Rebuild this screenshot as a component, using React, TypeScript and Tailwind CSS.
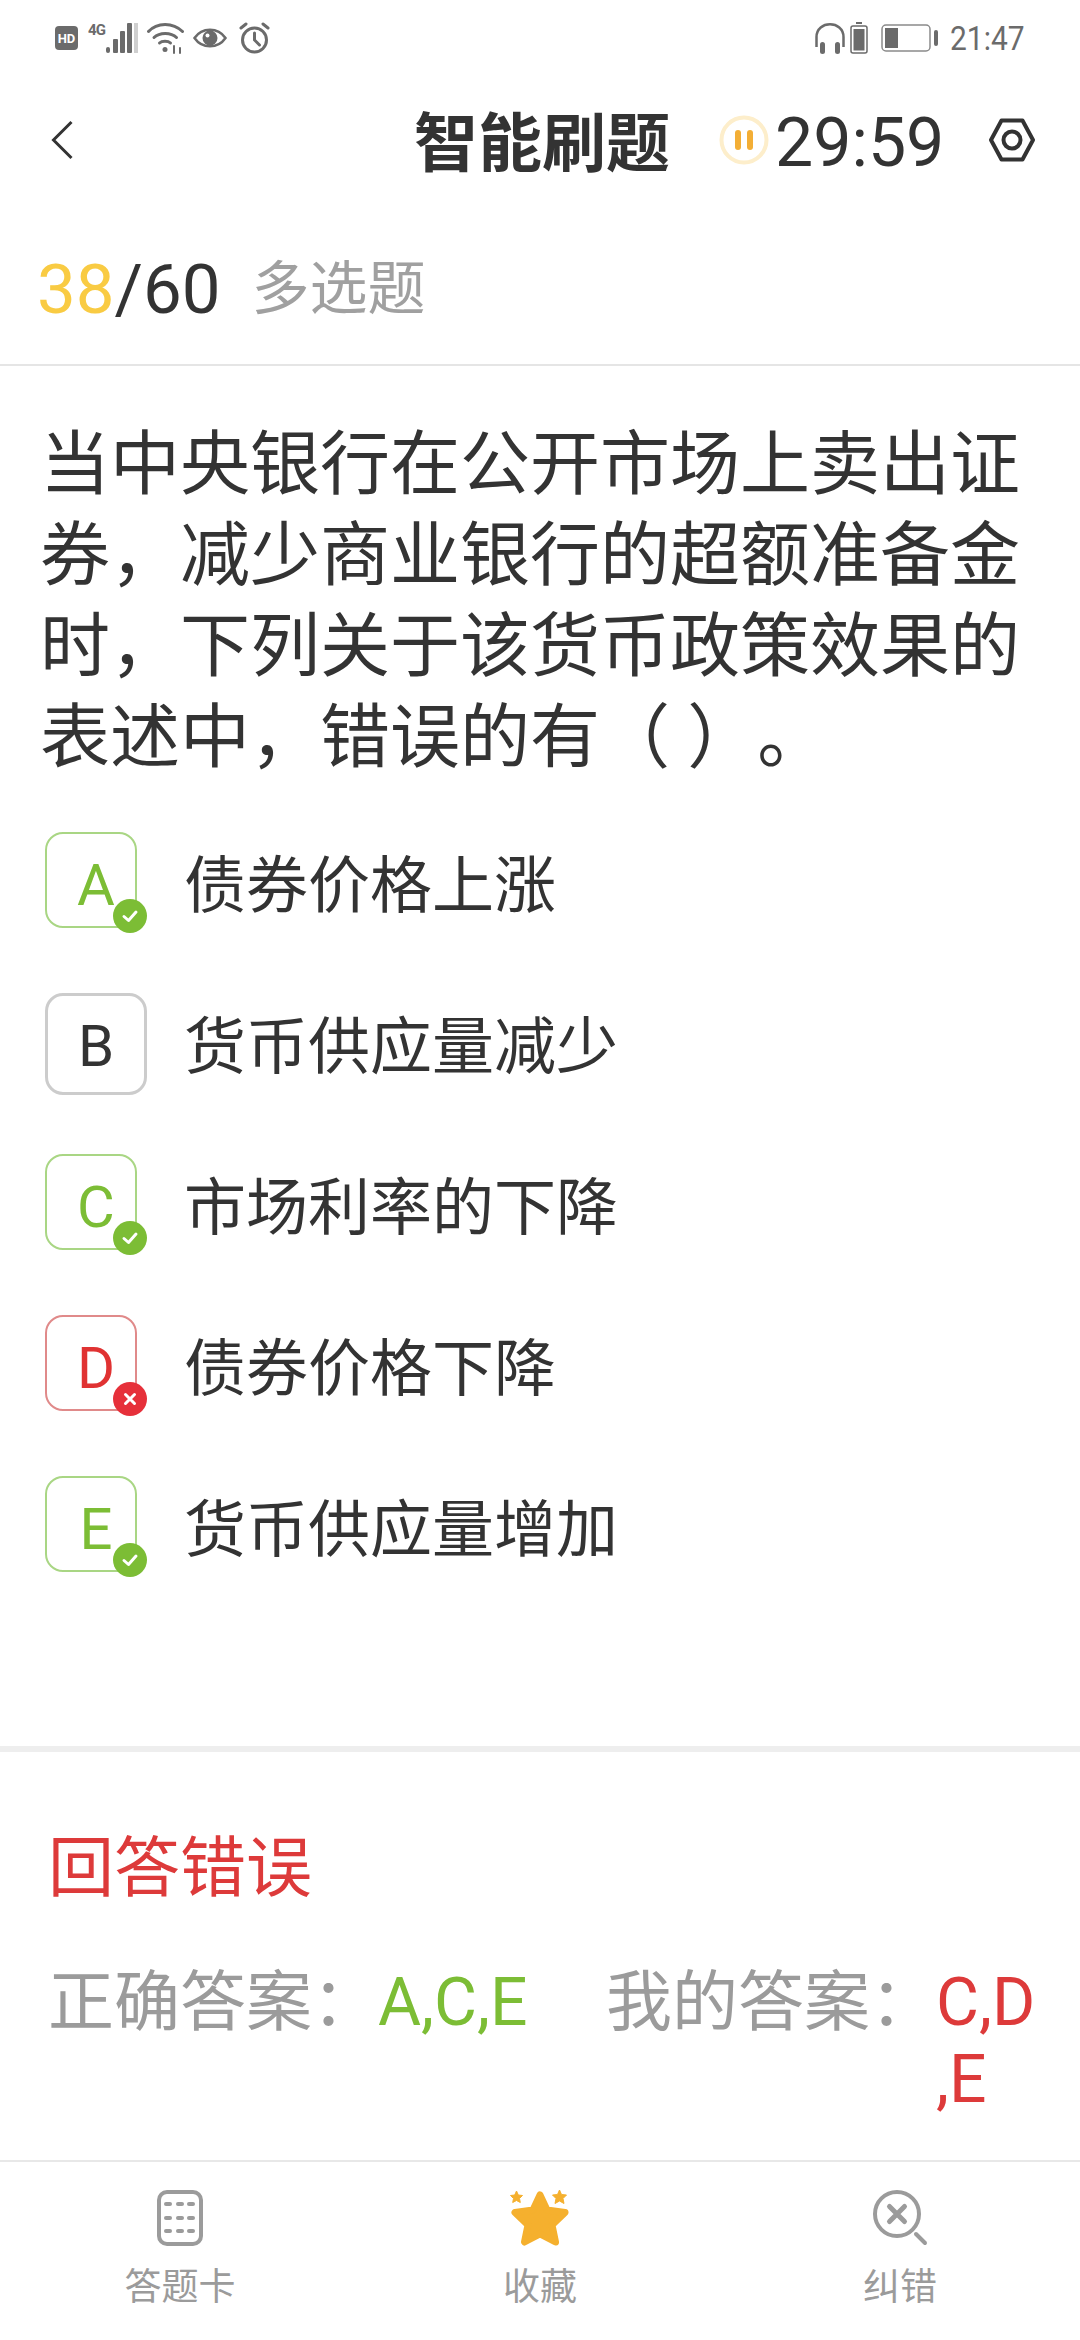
import React from 'react';

const font = "font-['Roboto','Noto_Sans_CJK_SC',sans-serif]";

const options = [
  { letter: 'A', text: '债券价格上涨', state: 'right' },
  { letter: 'B', text: '货币供应量减少', state: 'none' },
  { letter: 'C', text: '市场利率的下降', state: 'right' },
  { letter: 'D', text: '债券价格下降', state: 'wrong' },
  { letter: 'E', text: '货币供应量增加', state: 'right' },
];

function StatusLeft() {
  return (
    <div className="flex items-center">
      <svg width="24" height="24" viewBox="0 0 24 24" className="ml-[55px]">
        <rect x="0" y="0" width="23" height="24" rx="4" fill="#6b6b6b" />
        <text x="11.5" y="17" textAnchor="middle" fontSize="13" fontWeight="700" fill="#fff" fontFamily="Roboto">HD</text>
      </svg>
      <svg width="52" height="32" viewBox="0 0 52 32" className="ml-[9px]">
        <text x="0" y="13" fontSize="15" fontWeight="700" fill="#6b6b6b" fontFamily="Roboto" textLength="18">4G</text>
        <rect x="18" y="25" width="4" height="6" rx="2" fill="#6b6b6b" />
        <rect x="25" y="17" width="5" height="14" rx="1" fill="#6b6b6b" />
        <rect x="32" y="9" width="5" height="22" rx="1" fill="#6b6b6b" />
        <rect x="39" y="1" width="5" height="30" rx="1" fill="#6b6b6b" />
        <rect x="46" y="1" width="4" height="30" fill="#cfcfcf" />
      </svg>
      <svg width="37" height="32" viewBox="0 0 37 32" className="ml-[7px]" fill="none" stroke="#6b6b6b" strokeWidth="3" strokeLinecap="round">
        <path d="M1.5 9.5C10 0 26 0 35.5 9.5" />
        <path d="M7 15.5C12.5 10 24 10 29.5 15.5" />
        <path d="M12.5 21C15 18.5 21 18.5 23.5 21" />
        <circle cx="18" cy="27.5" r="2.5" fill="#6b6b6b" stroke="none" />
        <path d="M27 24L27 31M33 26L33 31" strokeWidth="2" />
      </svg>
      <svg width="34" height="28" viewBox="0 0 34 28" className="ml-[9px]" fill="none">
        <path d="M1.5 14C9 3 25 3 32.5 14C25 25 9 25 1.5 14Z" stroke="#6b6b6b" strokeWidth="2.5" />
        <circle cx="17" cy="14" r="7.5" fill="#6b6b6b" />
        <circle cx="14.5" cy="11.5" r="2" fill="#fff" />
      </svg>
      <svg width="31" height="32" viewBox="0 0 31 32" className="ml-[12px]" fill="none" stroke="#6b6b6b" strokeWidth="3" strokeLinecap="round">
        <circle cx="15.5" cy="18" r="12" />
        <path d="M15.5 11L15.5 18L20.5 23" />
        <path d="M2 6L7 2M29 6L24 2" />
      </svg>
    </div>
  );
}

function StatusRight() {
  return (
    <div className="flex items-center">
      <svg width="30" height="32" viewBox="0 0 30 32" fill="none">
        <path d="M1.5 25V15C1.5 -2 28.5 -2 28.5 15V25" stroke="#6b6b6b" strokeWidth="2.5" />
        <rect x="5" y="20" width="5" height="12" rx="2.5" fill="#6b6b6b" />
        <rect x="20" y="20" width="5" height="12" rx="2.5" fill="#6b6b6b" />
      </svg>
      <svg width="18" height="32" viewBox="0 0 18 32" className="ml-[5px]" fill="none">
        <rect x="6" y="0" width="6" height="2" fill="#6b6b6b" />
        <rect x="1" y="4" width="16" height="27" rx="2" stroke="#6b6b6b" strokeWidth="1.5" />
        <rect x="3.5" y="7" width="11" height="21.5" fill="#6b6b6b" />
      </svg>
      <svg width="58" height="28" viewBox="0 0 58 28" className="ml-[13px]" fill="none">
        <rect x="1" y="1" width="48" height="26" rx="4" stroke="#8a8a8a" strokeWidth="1.5" />
        <rect x="4" y="4" width="13" height="20" fill="#6b6b6b" />
        <rect x="53" y="6" width="4" height="16" rx="2" fill="#6b6b6b" />
      </svg>
      <span className={`ml-[11px] w-[72px] origin-left scale-x-[0.88] text-[34px] leading-none text-[#6b6b6b] ${font}`}>21:47</span>
    </div>
  );
}

function OptionRow({ letter, text, state }: { letter: string; text: string; state: string }) {
  const frame =
    state === 'right'
      ? 'w-[92px] h-[96px] border-2 border-[#a9d684]'
      : state === 'wrong'
        ? 'w-[92px] h-[96px] border-2 border-[#e08a8a]'
        : 'w-[102px] h-[102px] border-[3px] border-[#cccccc]';
  const color = state === 'right' ? 'text-[#7cbd35]' : state === 'wrong' ? 'text-[#e03232]' : 'text-[#333333]';
  return (
    <div className="flex h-[161px] items-center">
      <div className={`relative flex h-[102px] w-[102px] items-center justify-center text-[58px] leading-none ${color}`}>
        <div className={`absolute left-0 top-[-2px] rounded-[18px] ${frame}`} />
        <span>{letter}</span>
        {state !== 'none' && (
          <div className={`absolute left-[68px] top-[65px] flex h-[34px] w-[34px] items-center justify-center rounded-full ${state === 'right' ? 'bg-[#7cbd35]' : 'bg-[#e6303a]'}`}>
            <svg width="18" height="18" viewBox="0 0 18 18" fill="none" stroke="#fff" strokeWidth="3" strokeLinecap="round" strokeLinejoin="round">
              {state === 'right' ? <path d="M3 9.5L7.5 13.5L15 5" /> : <path d="M4.5 4.5L13.5 13.5M13.5 4.5L4.5 13.5" />}
            </svg>
          </div>
        )}
      </div>
      <span className="ml-[37px] mt-[5px] text-[62px] leading-none text-[#333333]">{text}</span>
    </div>
  );
}

function CardIcon() {
  return (
    <svg width="46" height="56" viewBox="0 0 46 56" fill="none">
      <rect x="2" y="2" width="42" height="52" rx="8" stroke="#9b9b9b" strokeWidth="4" />
      {[14, 28, 41].map((y) =>
        [11, 23, 34].map((x) => <rect key={`${x}-${y}`} x={x - 4} y={y - 2} width="8" height="4" rx="2" fill="#9b9b9b" />),
      )}
    </svg>
  );
}

function StarIcon() {
  return (
    <svg width="60" height="56" viewBox="0 0 60 56" fill="#f5b02e" stroke="#f5b02e" strokeLinejoin="round">
      <path d="M30 5L37 20L55 22.5L42 35L45.5 52L30 44L14.500 52L18 35L5 22.5L23 20Z" strokeWidth="7" />
      <path d="M6.500 1L8.300 5L12.500 5.500L9.500 8.500L10.300 12.500L6.500 10.500L2.700 12.500L3.500 8.500L0.500 5.500L4.700 5Z" strokeWidth="1" />
      <path d="M49.500 0L51.500 4.500L56.500 5L53 8.500L54 13.500L49.500 11L45 13.500L46 8.500L42.500 5L47.500 4.500Z" strokeWidth="1" />
    </svg>
  );
}

function SearchXIcon() {
  return (
    <svg width="56" height="56" viewBox="0 0 56 56" fill="none" stroke="#9b9b9b" strokeLinecap="round">
      <circle cx="25" cy="24" r="22" strokeWidth="4" />
      <path d="M17.500 16.500L32.500 31.500M32.500 16.500L17.500 31.500" strokeWidth="5" />
      <path d="M44 44L53 53" strokeWidth="4" />
    </svg>
  );
}

function TabItem({ icon, label }: { icon: React.ReactNode; label: string }) {
  return (
    <div className="flex w-[360px] flex-col items-center">
      <div className="flex h-[56px] items-center justify-center">{icon}</div>
      <span className="mt-[22px] text-[37px] leading-[40px] text-[#9b9b9b]">{label}</span>
    </div>
  );
}

export default function App() {
  return (
    <div className={`flex h-[2340px] w-[1080px] flex-col overflow-hidden bg-white ${font}`}>
      <div className="flex h-[75px] items-center justify-between">
        <StatusLeft />
        <div className="pr-[58px]">
          <StatusRight />
        </div>
      </div>

      <div className="flex h-[133px] items-center pb-[3px] pl-[51px]">
        <svg width="22" height="40" viewBox="0 0 22 40" fill="none" stroke="#333333" strokeWidth="3">
          <path d="M20.500 2L2.500 20L20.500 38" />
        </svg>
        <span className="ml-[341px] mt-[9px] text-[64px] font-bold leading-none text-[#333333]">智能刷题</span>
        <svg width="50" height="50" viewBox="0 0 50 50" className="ml-[49px]" fill="none">
          <circle cx="25" cy="25" r="22.500" stroke="#fdeecb" strokeWidth="4" />
          <rect x="16" y="15" width="6" height="20" rx="3" fill="#f3ae35" />
          <rect x="28" y="15" width="6" height="20" rx="3" fill="#f3ae35" />
        </svg>
        <span className="ml-[6px] mt-[6px] text-[68px] leading-none text-[#333333]">29:59</span>
        <svg width="46" height="44" viewBox="0 0 46 44" className="ml-[45px]" fill="none" stroke="#333333" strokeWidth="4" strokeLinejoin="round">
          <path d="M12.500 2.500H33.500L44 22L33.500 41.500H12.500L2 22Z" />
          <circle cx="23" cy="22" r="8.500" />
        </svg>
      </div>

      <div className="flex h-[158px] items-center border-b-2 border-[#e5e5e5] pl-[37px] pt-[6px]">
        <span className="text-[69px] leading-none text-[#333333]">
          <span className="text-[#f9cb43]">38</span>/60
        </span>
        <span className="ml-[31px] text-[58px] leading-none text-[#a0a0a0]">多选题</span>
      </div>

      <main className="min-h-0 flex-1 overflow-hidden">
        <p className="w-[1040px] pl-[40px] pt-[54px] text-[70px] leading-[91px] text-[#333333] [text-spacing-trim:space-all]">
          当中央银行在公开市场上卖出证券，减少商业银行的超额准备金时，下列关于该货币政策效果的表述中，错误的有（ ）。
        </p>

        <div className="mt-[20px] pl-[45px]">
          {options.map((o) => (
            <OptionRow key={o.letter} {...o} />
          ))}
        </div>

        <div className="mt-[137px] h-[6px] bg-[#eeeeee]" />

        <div className="pl-[48px]">
          <div className="mt-[84px] text-[66px] leading-[66px] text-[#dd3a3a]">回答错误</div>
          <div className="mt-[62px] flex text-[66px] leading-[77px]">
            <div className="flex w-[558px]">
              <span className="text-[#9b9b9b]">正确答案：</span>
              <span className="text-[#7cbd35]">A,C,E</span>
            </div>
            <div className="flex">
              <span className="text-[#9b9b9b]">我的答案：</span>
              <span className="w-[105px] text-[#dd3a3a]">
                C,D
                <br />
                ,E
              </span>
            </div>
          </div>
        </div>
      </main>

      <nav className="flex h-[180px] justify-center border-t-2 border-[#e8e8e8] pt-[28px]">
        <TabItem icon={<CardIcon />} label="答题卡" />
        <TabItem icon={<StarIcon />} label="收藏" />
        <TabItem icon={<SearchXIcon />} label="纠错" />
      </nav>
    </div>
  );
}
